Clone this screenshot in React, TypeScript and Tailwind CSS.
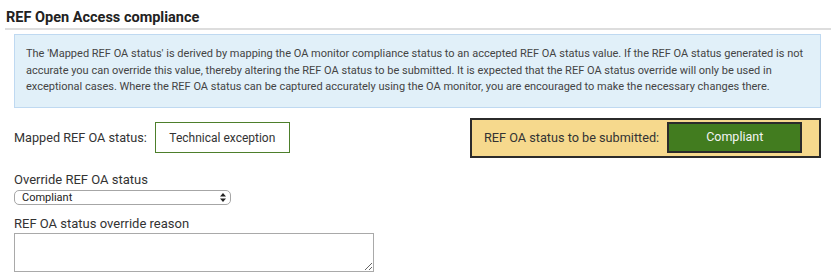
import { useState } from "react";

const INFO_TEXT =
  "The 'Mapped REF OA status' is derived by mapping the OA monitor compliance status to an accepted REF OA status value. If the REF OA status generated is not accurate you can override this value, thereby altering the REF OA status to be submitted. It is expected that the REF OA status override will only be used in exceptional cases. Where the REF OA status can be captured accurately using the OA monitor, you are encouraged to make the necessary changes there.";

const OPTIONS = ["Compliant", "Technical exception", "Access exception", "Deposit exception", "Other exception", "Not compliant"];

const App = () => {
  const [override, setOverride] = useState("Compliant");
  const [reason, setReason] = useState("");

  return (
    <div className="w-[838px] h-[279px] bg-white font-['Roboto','Liberation_Sans',sans-serif] text-[#333]">
      <div className="pl-[5px] pr-[7px]">
        <h2 className="pl-px pt-[9px] pb-px text-[14.5px] leading-[18px] font-bold text-[#222] border-b-2 border-[#dddddd]">
          REF Open Access compliance
        </h2>

        <div className="pl-[9px] pr-[9px] mr-[1px]">
          {/* info panel */}
          <div className="mt-[4px] border border-[#bfd9f1] bg-[#e1f0f9] pl-[11px] pr-[12px] pt-[11px] pb-[11px] text-[11px] leading-[16.5px] text-[#444]">
            {INFO_TEXT}
          </div>

          {/* mapped + submitted row */}
          <div className="mt-[10px] flex items-center justify-between">
            <div className="flex items-center">
              <span className="text-[12.7px]">Mapped REF OA status:</span>
              <div className="ml-[8px] w-[135px] h-[31px] flex items-center justify-center border border-[#4d7f2b] text-[12px] text-[#333]">
                Technical exception
              </div>
            </div>
            <div className="w-[351px] h-[40px] flex items-center border-2 border-[#2b2b2b] bg-[#f6d98d] pl-[12px]">
              <span className="text-[12.7px] text-[#333]">REF OA status to be submitted:</span>
              <div className="ml-[8px] w-[135px] h-[31px] flex items-center justify-center border-2 border-[#2b2b2b] bg-[#427c1f] text-[12.5px] text-[#f4f4f4]">
                Compliant
              </div>
            </div>
          </div>

          {/* override select */}
          <label className="block mt-[14px] text-[13px] leading-[16px]">Override REF OA status</label>
          <div className="relative mt-[2px] w-[217px]">
            <select
              value={override}
              onChange={(e) => setOverride(e.target.value)}
              className="block w-full h-[15px] appearance-none rounded-[5px] border border-[#a6a6a6] bg-white pl-[7px] text-[11px] leading-[13px] text-[#222] outline-none"
            >
              {OPTIONS.map((o) => (
                <option key={o} value={o}>{o}</option>
              ))}
            </select>
            <svg className="pointer-events-none absolute right-[5px] top-[3px]" width="6" height="9" viewBox="0 0 6 9">
              <path d="M0 3.5 L3 0 L6 3.5 Z M0 5.5 L3 9 L6 5.5 Z" fill="#222" />
            </svg>
          </div>

          {/* reason */}
          <label className="block mt-[11px] text-[13px] leading-[16px]">REF OA status override reason</label>
          <textarea
            value={reason}
            onChange={(e) => setReason(e.target.value)}
            className="block mt-[1px] w-[360px] h-[39px] border border-[#a9a9a9] bg-white text-[12px] outline-none"
          />
        </div>
      </div>
    </div>
  );
};

export default App;
